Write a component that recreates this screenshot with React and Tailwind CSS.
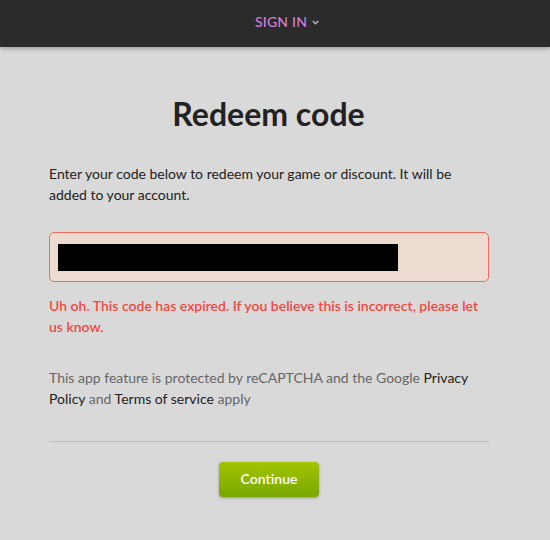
import React from "react";

export default function App() {
  return (
    <div
      className="min-h-[540px] w-[550px] bg-[#d9d9d9] text-[#222]"
      style={{ fontFamily: "Lato, 'Noto Sans', sans-serif" }}
    >
      <header className="relative flex h-[47px] items-center justify-center bg-[#2b2b2b] pb-[4px] shadow-[0_2px_4px_rgba(0,0,0,0.25)]">
        <div className="ml-[24px] flex items-center gap-[5px]">
          <span className="text-[14px] font-medium tracking-[0.2px] text-[#d27fd9]">SIGN IN</span>
          <svg width="7" height="5" viewBox="0 0 7 5" className="mt-[1px]">
            <path d="M0.8 1 L3.5 3.8 L6.2 1" fill="none" stroke="#bbbbbb" strokeWidth="1.3" />
          </svg>
        </div>
      </header>

      <main className="ml-[49px] w-[440px] pt-[48px]">
        <h1 className="-ml-[1px] text-center text-[32px] font-bold leading-[38px] text-[#222]">Redeem code</h1>

        <p className="mt-[30px] text-[14px] leading-[21px] text-[#222]">
          Enter your code below to redeem your game or discount. It will be added to your account.
        </p>

        <div className="mt-[27px] flex h-[50px] items-center rounded-[5px] border border-[#f26a5b] bg-[#eddbd2] px-[8px]">
          <div className="h-[27px] w-[340px] bg-black" />
        </div>

        <p className="mt-[13px] text-[14px] font-semibold leading-[21px] text-[#f4473e]">
          Uh oh. This code has expired. If you believe this is incorrect, please let us know.
        </p>

        <p className="mt-[30px] text-[14px] leading-[21px] text-[#666]">
          This app feature is protected by reCAPTCHA and the Google{" "}
          <span className="text-[#222]">Privacy Policy</span> and{" "}
          <span className="text-[#222]">Terms of service</span> apply
        </p>

        <div className="mt-[32px] h-px bg-[#bdbdbd]" />

        <div className="mt-[20px] flex justify-center">
          <button className="h-[35px] w-[100px] rounded-[4px] bg-gradient-to-b from-[#a0c400] to-[#7aa800] pb-[3px] text-[14px] font-semibold text-white shadow-[0_1px_3px_rgba(0,0,0,0.3)]">
            Continue
          </button>
        </div>
      </main>
    </div>
  );
}
